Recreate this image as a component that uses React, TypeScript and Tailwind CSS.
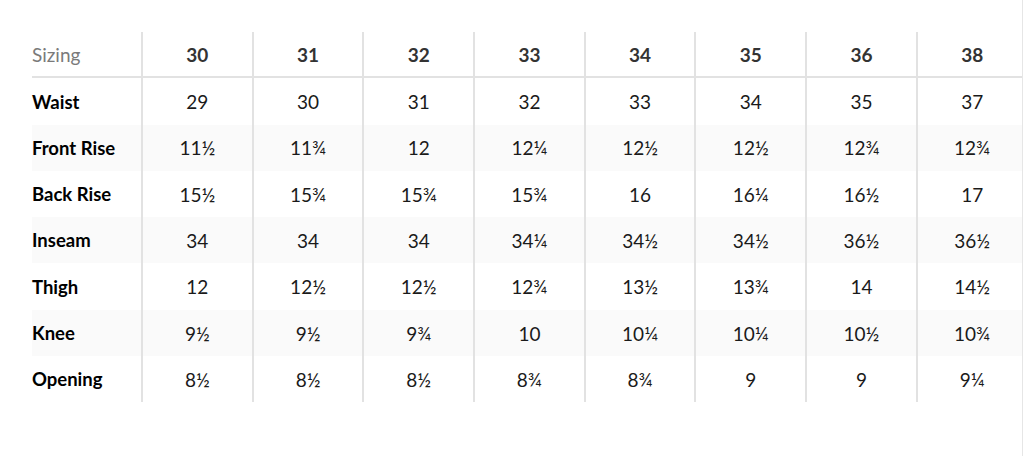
const sizes = ["30", "31", "32", "33", "34", "35", "36", "38"];

const rows: { label: string; values: string[] }[] = [
  { label: "Waist", values: ["29", "30", "31", "32", "33", "34", "35", "37"] },
  { label: "Front Rise", values: ["11½", "11¾", "12", "12¼", "12½", "12½", "12¾", "12¾"] },
  { label: "Back Rise", values: ["15½", "15¾", "15¾", "15¾", "16", "16¼", "16½", "17"] },
  { label: "Inseam", values: ["34", "34", "34", "34¼", "34½", "34½", "36½", "36½"] },
  { label: "Thigh", values: ["12", "12½", "12½", "12¾", "13½", "13¾", "14", "14½"] },
  { label: "Knee", values: ["9½", "9½", "9¾", "10", "10¼", "10¼", "10½", "10¾"] },
  { label: "Opening", values: ["8½", "8½", "8½", "8¾", "8¾", "9", "9", "9¼"] },
];

function Cell({ children, className = "" }: { children: React.ReactNode; className?: string }) {
  return (
    <div className={`w-[110.7px] shrink-0 h-full flex items-center justify-center border-l-2 border-[#e2e2e2] ${className}`}>
      {children}
    </div>
  );
}

export default function App() {
  return (
    <div
      className="w-[1023px] h-[456px] bg-white overflow-hidden border-r border-[#e6e6e6]"
      style={{ fontFamily: "Lato, 'Noto Sans', sans-serif" }}
    >
      <div className="pt-[32px] pl-[32px]">
        <div className="flex h-[46.3px] border-b-2 border-[#e2e2e2] w-[1000px]">
          <div className="w-[109px] shrink-0 flex items-center text-[19px] text-[#7a7a7a] pt-[2px]">Sizing</div>
          {sizes.map((s) => (
            <Cell key={s} className="text-[19px] font-bold text-[#333] pt-[2px]">
              {s}
            </Cell>
          ))}
        </div>
        {rows.map((r, i) => (
          <div
            key={r.label}
            className={`flex h-[46.3px] w-[1000px] ${i % 2 === 1 ? "bg-[#fafafa]" : "bg-white"}`}
          >
            <div className="w-[109px] shrink-0 flex items-center text-[18.5px] font-bold text-black pt-[2px]">
              {r.label}
            </div>
            {r.values.map((v, j) => (
              <Cell key={j} className="text-[19px] text-[#1a1a1a] pt-[2px]">
                {v}
              </Cell>
            ))}
          </div>
        ))}
      </div>
    </div>
  );
}
